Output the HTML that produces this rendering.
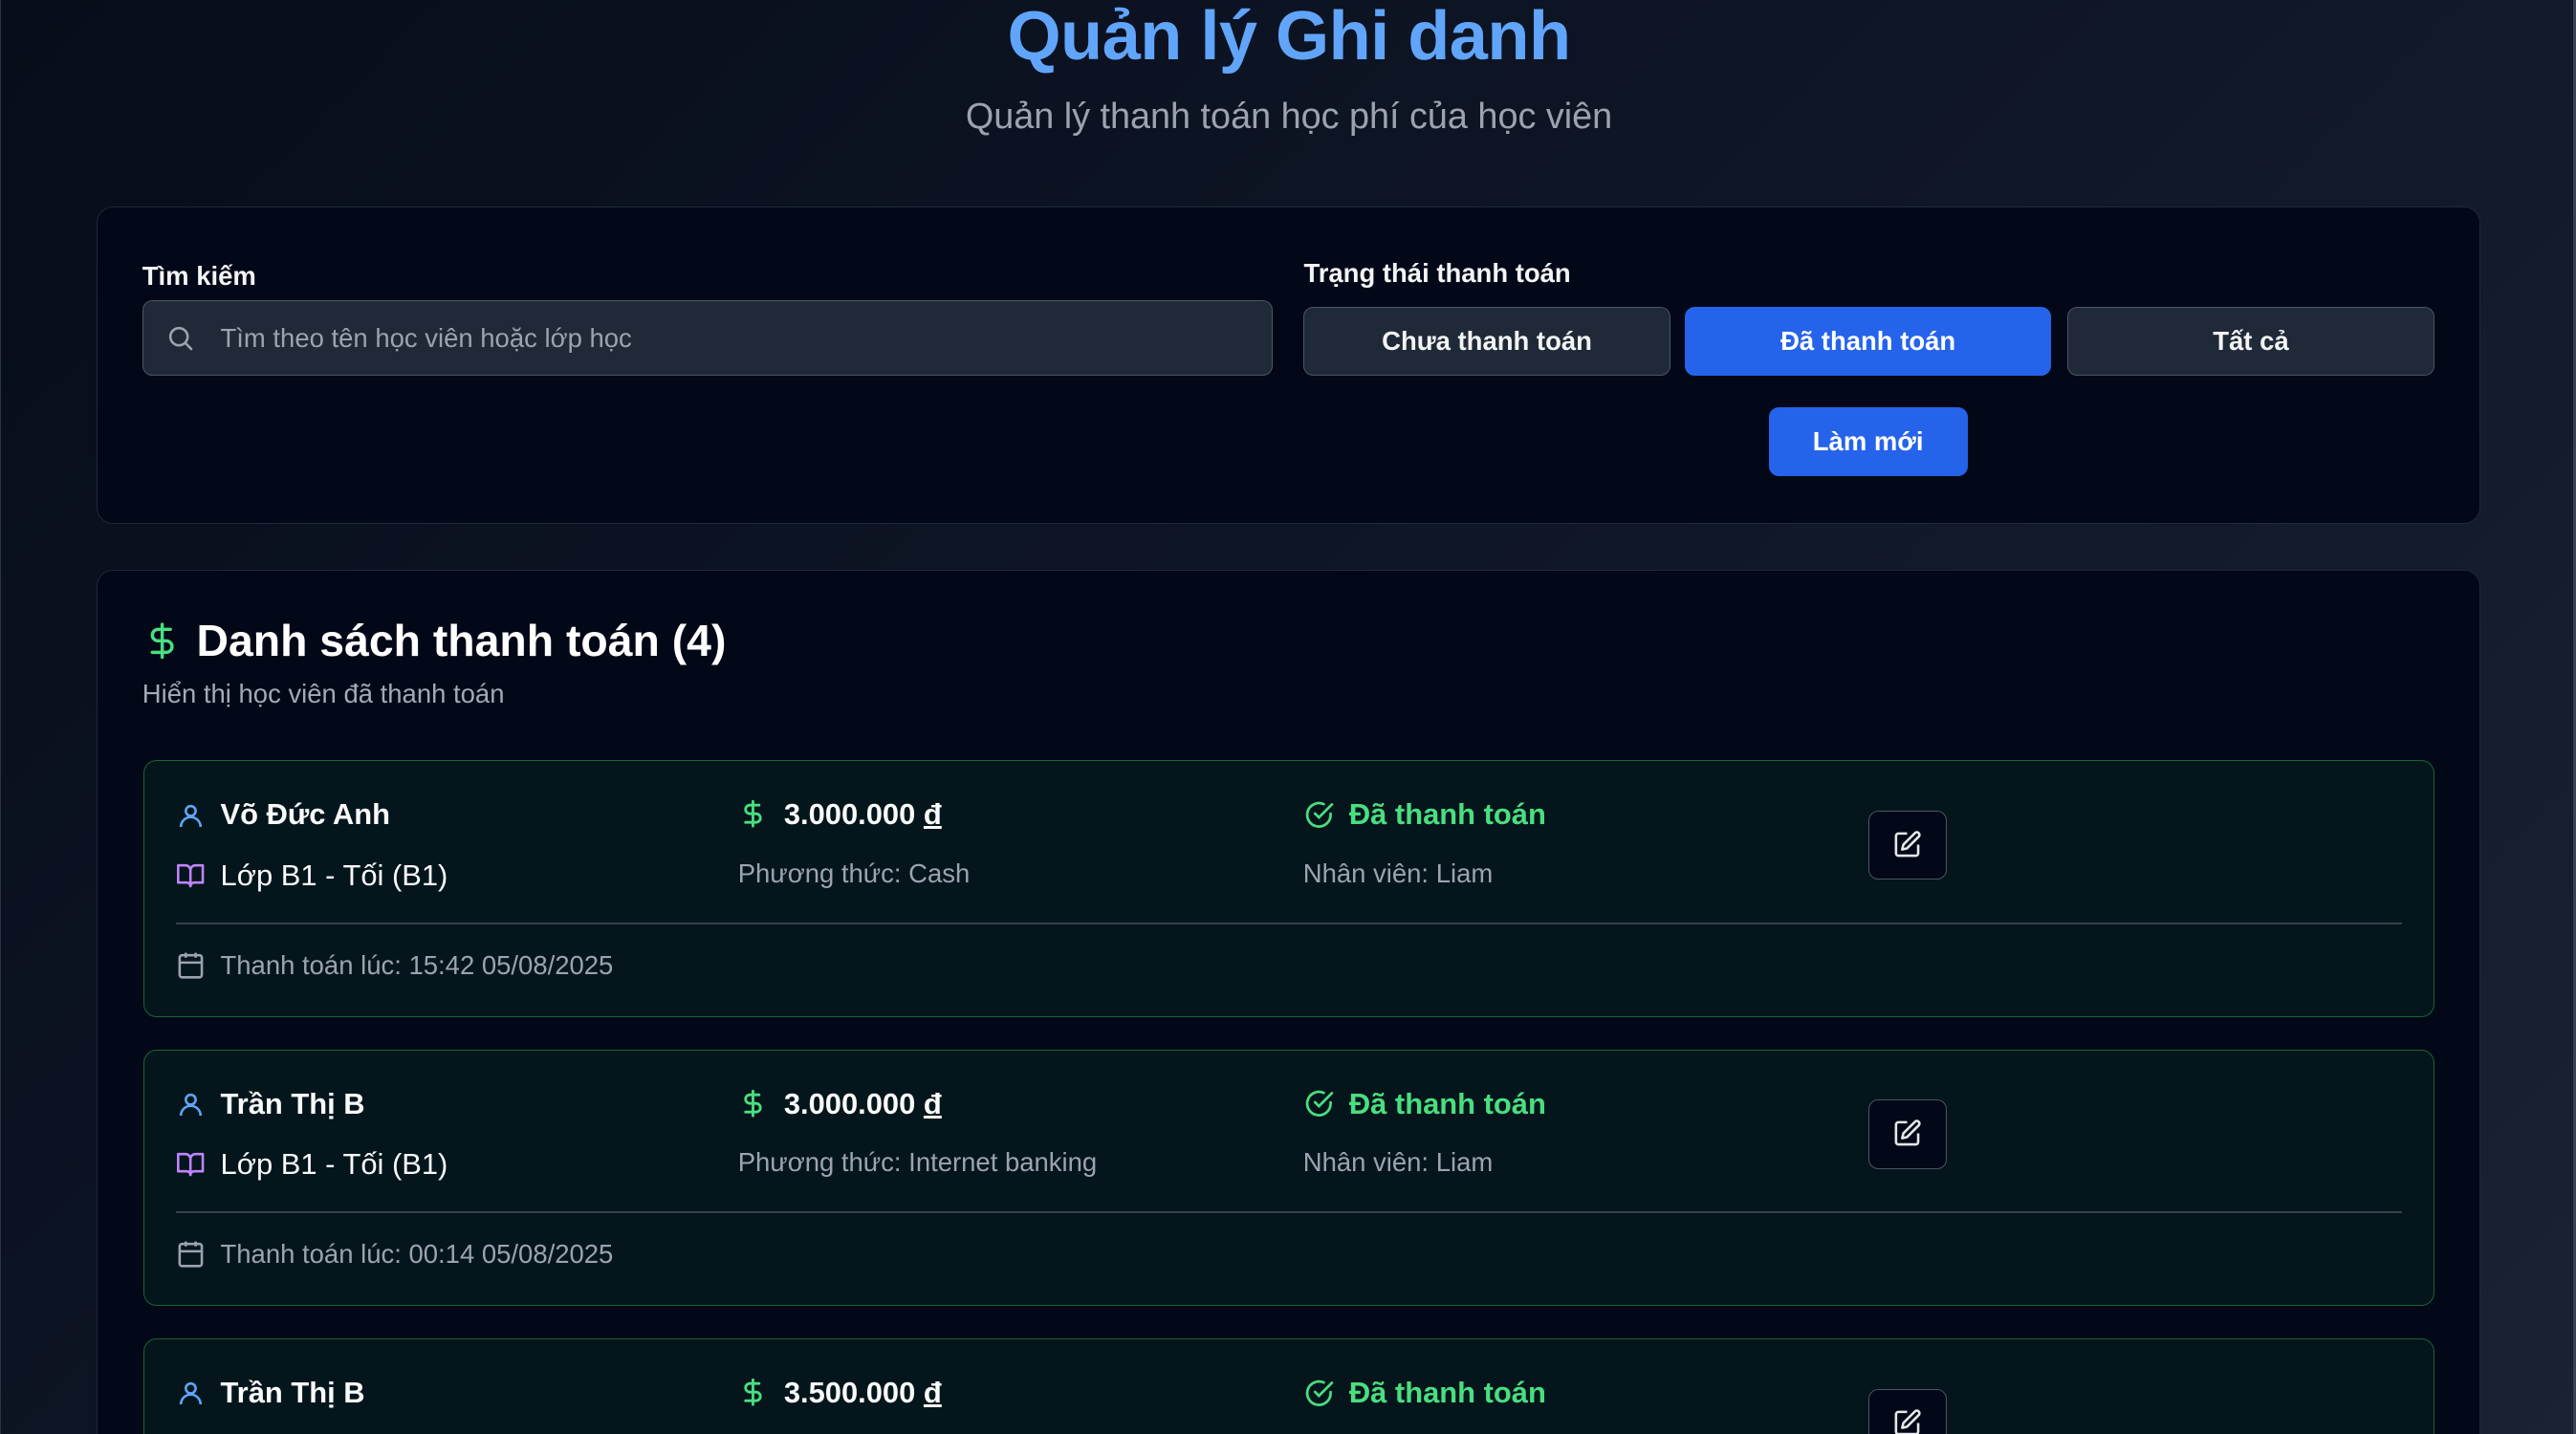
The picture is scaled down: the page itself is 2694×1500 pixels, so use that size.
<!DOCTYPE html>
<html><head><meta charset="utf-8">
<style>
html{zoom:1.71811;overflow:hidden;height:873px}
*{box-sizing:border-box;margin:0;padding:0}
body{width:1568px;height:873px;overflow:hidden;font-family:"Liberation Sans",sans-serif;color:#f9fafb;background:#0b1120}
#wrap{position:relative;width:1568px;height:873px;overflow:hidden;
background:linear-gradient(135deg,#070d1a 0%,#0f1626 50%,#1a2233 100%);border-left:1px solid #2a3344;border-right:2px solid #3a4354}
h1{position:absolute;left:0;width:1568px;text-align:center;top:-2px;font-size:42px;font-weight:700;color:#60a5fa;letter-spacing:-0.3px}
.sub{position:absolute;left:0;width:1568px;text-align:center;top:59px;font-size:22px;color:#9ca3af}
.card{position:absolute;left:58px;width:1451px;background:#020817;border:1px solid #1e293b;border-radius:10px}
.lbl{font-size:16px;font-weight:600;color:#f3f4f6}
.input{position:absolute;left:86px;top:183px;width:688px;height:46px;background:#1f2937;border:1px solid #4b5563;border-radius:6px;font-size:16px;color:#9ca3af;padding:13px 0 0 47px}
.btn{position:absolute;height:42px;border-radius:6px;font-size:16px;font-weight:600;display:flex;align-items:center;justify-content:center}
.gray{background:#1f2937;border:1px solid #4b5563;color:#f3f4f6}
.blue{background:#2563eb;color:#fff}
.item{position:absolute;left:87px;width:1394px;height:156px;background:#04161c;border:1px solid #166534;border-radius:8px}
.t{position:absolute;white-space:nowrap}
.b18{font-size:18px;font-weight:600;color:#f9fafb}
.g16{font-size:16px;color:#9ca3af}
.grn{color:#4ade80}
.edit{position:absolute;left:1049px;top:30px;width:48px;height:42px;border:1px solid #4b5563;background:#020817;border-radius:6px}
.div{position:absolute;left:19px;right:19px;top:98px;height:1px;background:#374151}
svg{position:absolute}
</style></head><body><div id="wrap">
<h1>Quản lý Ghi danh</h1>
<div class="sub">Quản lý thanh toán học phí của học viên</div>

<div class="card" style="top:126px;height:193px"></div>
<div class="t lbl" style="left:86px;top:159px">Tìm kiếm</div>
<div class="input">Tìm theo tên học viên hoặc lớp học</div>
<svg style="left:100px;top:197px" width="18" height="18" viewBox="0 0 24 24" fill="none" stroke="#9ca3af" stroke-width="2" stroke-linecap="round"><circle cx="11" cy="11" r="7"/><path d="M21 21l-4.3-4.3"/></svg>
<div class="t lbl" style="left:793px;top:157px">Trạng thái thanh toán</div>
<div class="btn gray" style="left:793px;top:187px;width:223px">Chưa thanh toán</div>
<div class="btn blue" style="left:1025px;top:187px;width:223px">Đã thanh toán</div>
<div class="btn gray" style="left:1258px;top:187px;width:223px">Tất cả</div>
<div class="btn blue" style="left:1076px;top:248px;width:121px">Làm mới</div>

<div class="card" style="top:347px;height:600px"></div>
<svg style="left:86px;top:377px" width="24" height="26" viewBox="0 0 24 24" fill="none" stroke="#4ade80" stroke-width="2" stroke-linecap="round"><path d="M12 2v20M17 5H9.5a3.5 3.5 0 0 0 0 7h5a3.5 3.5 0 0 1 0 7H6"/></svg>
<div class="t" style="left:119px;top:374px;font-size:27px;font-weight:700;color:#fff">Danh sách thanh toán (4)</div>
<div class="t g16" style="left:86px;top:413px;color:#a3aab5">Hiển thị học viên đã thanh toán</div>

<div class="item" style="top:463px">
 <svg style="left:19px;top:24px" width="18" height="18" viewBox="0 0 24 24" fill="none" stroke="#60a5fa" stroke-width="2"><circle cx="12" cy="8" r="4"/><path d="M4 21a8 8 0 0 1 16 0"/></svg>
 <div class="t b18" style="left:46px;top:22px">Võ Đức Anh</div>
 <svg style="left:18px;top:60px" width="20" height="18" viewBox="0 0 24 24" fill="none" stroke="#c084fc" stroke-width="2" stroke-linejoin="round"><path d="M2 4h6a4 4 0 0 1 4 4v13a3 3 0 0 0-3-3H2zM22 4h-6a4 4 0 0 0-4 4v13a3 3 0 0 1 3-3h7z"/></svg>
 <div class="t b18" style="left:46px;top:59px;font-weight:500">Lớp B1 - Tối (B1)</div>
 <svg style="left:361px;top:22px" width="18" height="20" viewBox="0 0 24 24" fill="none" stroke="#4ade80" stroke-width="2.2" stroke-linecap="round"><path d="M12 2v20M17 5H9.5a3.5 3.5 0 0 0 0 7h5a3.5 3.5 0 0 1 0 7H6"/></svg>
 <div class="t b18" style="left:389px;top:22px;font-weight:700">3.000.000 <u>đ</u></div>
 <div class="t g16" style="left:361px;top:59px">Phương thức: Cash</div>
 <svg style="left:705px;top:23px" width="19" height="19" viewBox="0 0 24 24" fill="none" stroke="#4ade80" stroke-width="2" stroke-linecap="round"><path d="M21 11.1V12a9 9 0 1 1-5.3-8.2"/><path d="M9 11l3 3L22 4"/></svg>
 <div class="t b18 grn" style="left:733px;top:22px">Đã thanh toán</div>
 <div class="t g16" style="left:705px;top:59px">Nhân viên: Liam</div>
 <div class="edit"><svg style="left:14px;top:11px" width="18" height="18" viewBox="0 0 24 24" fill="none" stroke="#e5e7eb" stroke-width="2" stroke-linejoin="round"><path d="M12 3H5a2 2 0 0 0-2 2v14a2 2 0 0 0 2 2h14a2 2 0 0 0 2-2v-7"/><path d="M18.4 2.6a2.1 2.1 0 0 1 3 3L12 15l-4 1 1-4z"/></svg></div>
 <div class="div"></div>
 <svg style="left:19px;top:115px" width="18" height="18" viewBox="0 0 24 24" fill="none" stroke="#9ca3af" stroke-width="2"><rect x="3" y="4" width="18" height="18" rx="2"/><path d="M16 2v4M8 2v4M3 10h18"/></svg>
 <div class="t g16" style="left:46px;top:115px">Thanh toán lúc: 15:42 05/08/2025</div>
</div>

<div class="item" style="top:639px">
 <svg style="left:19px;top:24px" width="18" height="18" viewBox="0 0 24 24" fill="none" stroke="#60a5fa" stroke-width="2"><circle cx="12" cy="8" r="4"/><path d="M4 21a8 8 0 0 1 16 0"/></svg>
 <div class="t b18" style="left:46px;top:22px">Trần Thị B</div>
 <svg style="left:18px;top:60px" width="20" height="18" viewBox="0 0 24 24" fill="none" stroke="#c084fc" stroke-width="2" stroke-linejoin="round"><path d="M2 4h6a4 4 0 0 1 4 4v13a3 3 0 0 0-3-3H2zM22 4h-6a4 4 0 0 0-4 4v13a3 3 0 0 1 3-3h7z"/></svg>
 <div class="t b18" style="left:46px;top:59px;font-weight:500">Lớp B1 - Tối (B1)</div>
 <svg style="left:361px;top:22px" width="18" height="20" viewBox="0 0 24 24" fill="none" stroke="#4ade80" stroke-width="2.2" stroke-linecap="round"><path d="M12 2v20M17 5H9.5a3.5 3.5 0 0 0 0 7h5a3.5 3.5 0 0 1 0 7H6"/></svg>
 <div class="t b18" style="left:389px;top:22px;font-weight:700">3.000.000 <u>đ</u></div>
 <div class="t g16" style="left:361px;top:59px">Phương thức: Internet banking</div>
 <svg style="left:705px;top:23px" width="19" height="19" viewBox="0 0 24 24" fill="none" stroke="#4ade80" stroke-width="2" stroke-linecap="round"><path d="M21 11.1V12a9 9 0 1 1-5.3-8.2"/><path d="M9 11l3 3L22 4"/></svg>
 <div class="t b18 grn" style="left:733px;top:22px">Đã thanh toán</div>
 <div class="t g16" style="left:705px;top:59px">Nhân viên: Liam</div>
 <div class="edit"><svg style="left:14px;top:11px" width="18" height="18" viewBox="0 0 24 24" fill="none" stroke="#e5e7eb" stroke-width="2" stroke-linejoin="round"><path d="M12 3H5a2 2 0 0 0-2 2v14a2 2 0 0 0 2 2h14a2 2 0 0 0 2-2v-7"/><path d="M18.4 2.6a2.1 2.1 0 0 1 3 3L12 15l-4 1 1-4z"/></svg></div>
 <div class="div"></div>
 <svg style="left:19px;top:115px" width="18" height="18" viewBox="0 0 24 24" fill="none" stroke="#9ca3af" stroke-width="2"><rect x="3" y="4" width="18" height="18" rx="2"/><path d="M16 2v4M8 2v4M3 10h18"/></svg>
 <div class="t g16" style="left:46px;top:115px">Thanh toán lúc: 00:14 05/08/2025</div>
</div>

<div class="item" style="top:815px">
 <svg style="left:19px;top:24px" width="18" height="18" viewBox="0 0 24 24" fill="none" stroke="#60a5fa" stroke-width="2"><circle cx="12" cy="8" r="4"/><path d="M4 21a8 8 0 0 1 16 0"/></svg>
 <div class="t b18" style="left:46px;top:22px">Trần Thị B</div>
 <svg style="left:361px;top:22px" width="18" height="20" viewBox="0 0 24 24" fill="none" stroke="#4ade80" stroke-width="2.2" stroke-linecap="round"><path d="M12 2v20M17 5H9.5a3.5 3.5 0 0 0 0 7h5a3.5 3.5 0 0 1 0 7H6"/></svg>
 <div class="t b18" style="left:389px;top:22px;font-weight:700">3.500.000 <u>đ</u></div>
 <svg style="left:705px;top:23px" width="19" height="19" viewBox="0 0 24 24" fill="none" stroke="#4ade80" stroke-width="2" stroke-linecap="round"><path d="M21 11.1V12a9 9 0 1 1-5.3-8.2"/><path d="M9 11l3 3L22 4"/></svg>
 <div class="t b18 grn" style="left:733px;top:22px">Đã thanh toán</div>
 <div class="edit"><svg style="left:14px;top:11px" width="18" height="18" viewBox="0 0 24 24" fill="none" stroke="#e5e7eb" stroke-width="2" stroke-linejoin="round"><path d="M12 3H5a2 2 0 0 0-2 2v14a2 2 0 0 0 2 2h14a2 2 0 0 0 2-2v-7"/><path d="M18.4 2.6a2.1 2.1 0 0 1 3 3L12 15l-4 1 1-4z"/></svg></div>
</div>
</div></body></html>
